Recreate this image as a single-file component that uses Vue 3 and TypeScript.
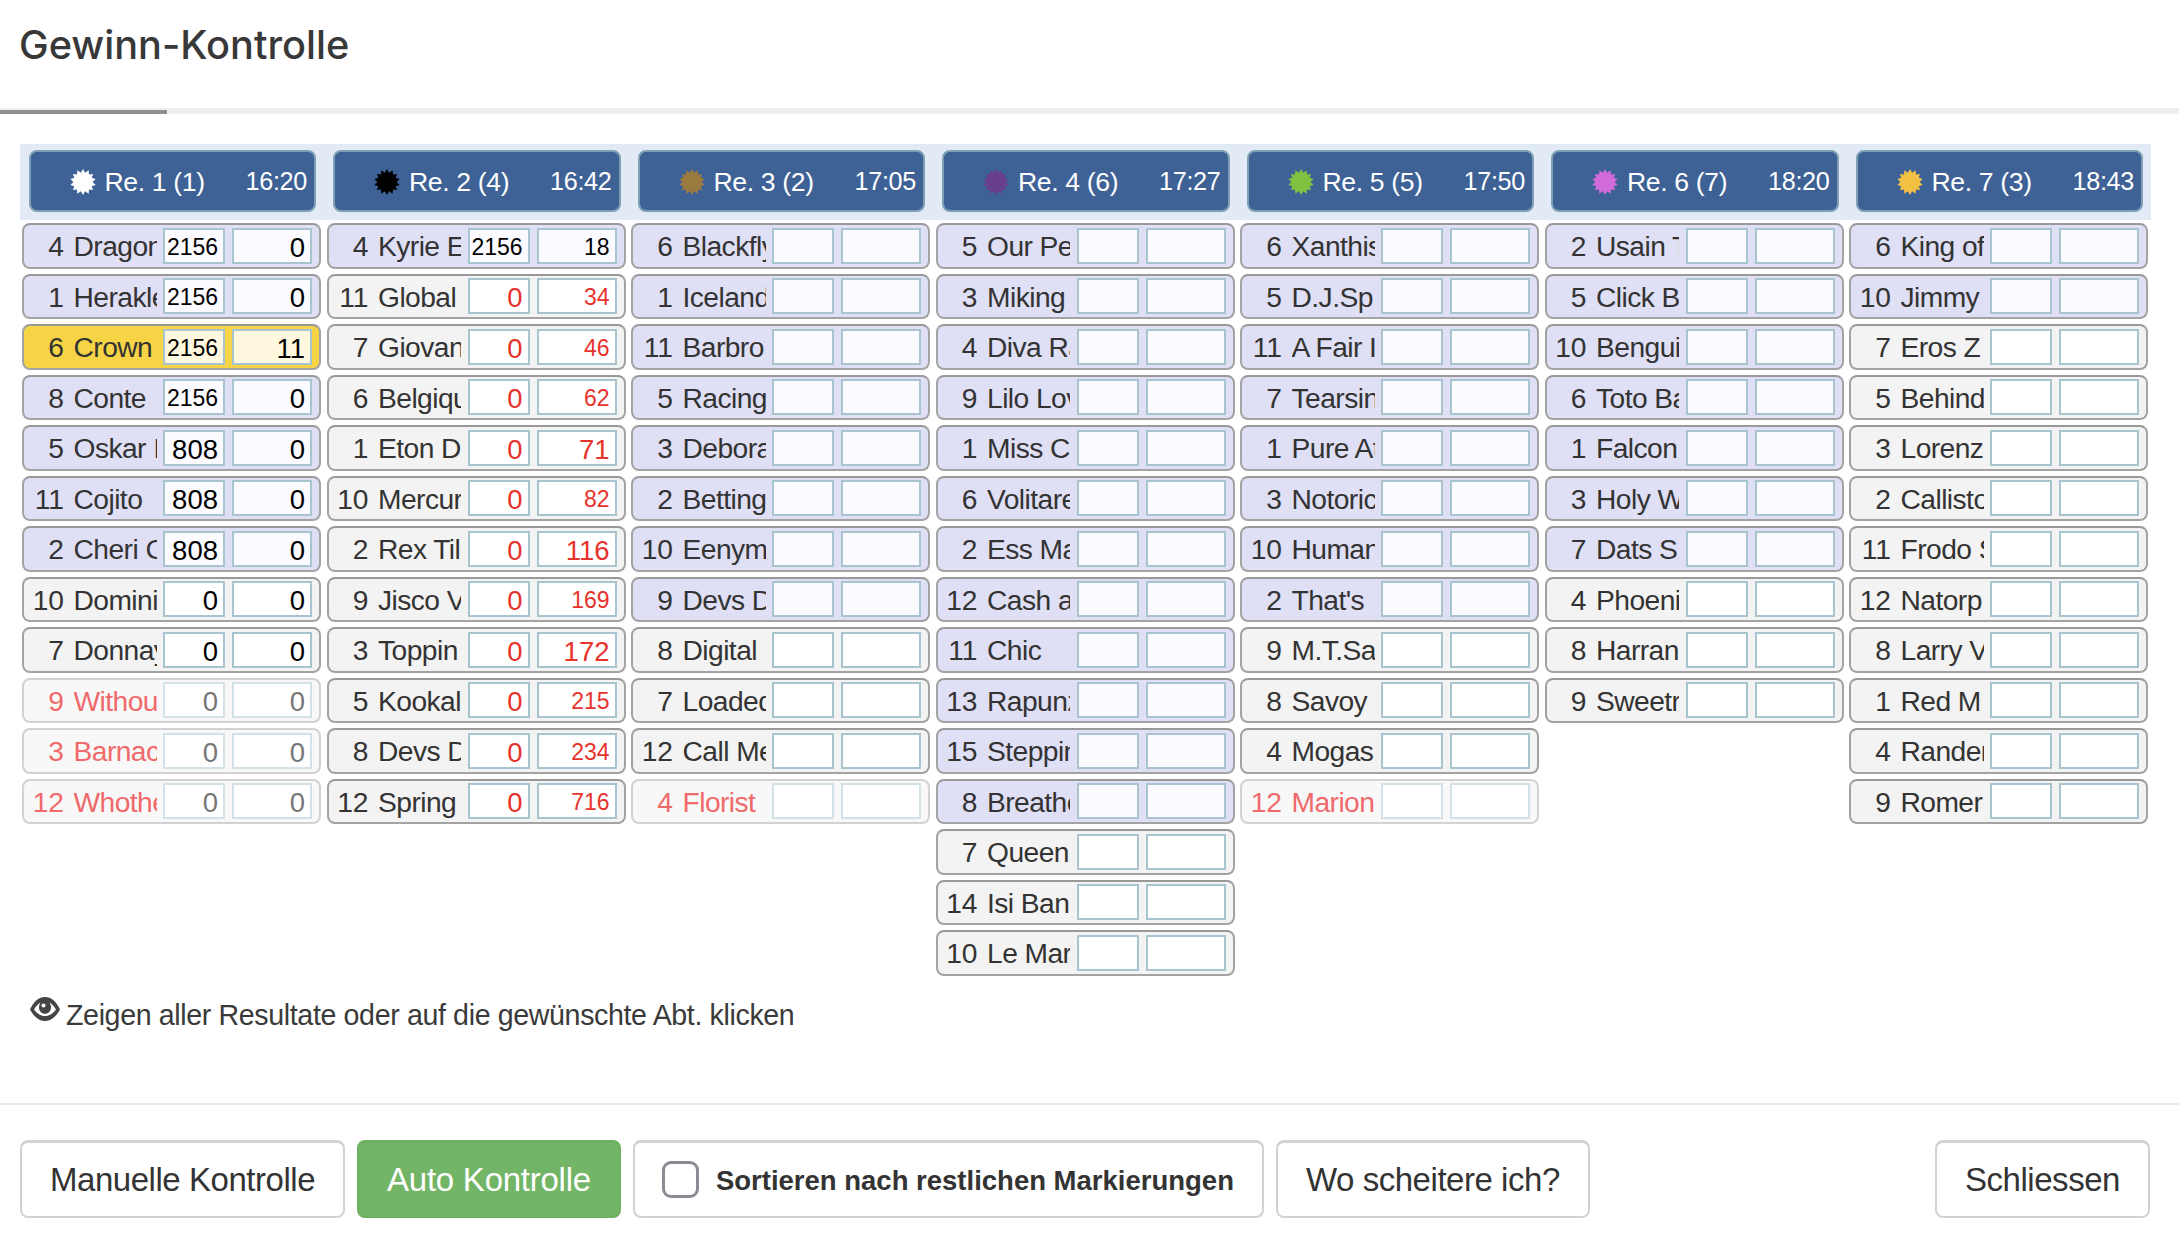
<script setup lang="ts">
interface Race { title: string; time: string; color: string; rows: string[]; highlighted: number; a?: string[]; b?: string[]; out?: number[]; gold?: number }

const big = new Set(['0', '808', '11', '71', '116', '172'])

const races: Race[] = [
  { title: 'Re. 1 (1)', time: '16:20', color: '#ffffff', highlighted: 7, gold: 2, out: [9, 10, 11],
    rows: ['4|Dragon', '1|Herakles', '6|Crown', '8|Conte', '5|Oskar I', '11|Cojito', '2|Cheri C', '10|Dominic', '7|Donnay', '9|Without', '3|Barnacle', '12|Whothe'],
    a: ['2156', '2156', '2156', '2156', '808', '808', '808', '0', '0', '0', '0', '0'],
    b: ['0', '0', '11', '0', '0', '0', '0', '0', '0', '0', '0', '0'] },
  { title: 'Re. 2 (4)', time: '16:42', color: '#000000', highlighted: 1,
    rows: ['4|Kyrie E', '11|Global', '7|Giovanni', '6|Belgique', '1|Eton D', '10|Mercury', '2|Rex Til', '9|Jisco V', '3|Toppin', '5|Kookal', '8|Devs D', '12|Spring'],
    a: ['2156', '0', '0', '0', '0', '0', '0', '0', '0', '0', '0', '0'],
    b: ['18', '34', '46', '62', '71', '82', '116', '169', '172', '215', '234', '716'] },
  { title: 'Re. 3 (2)', time: '17:05', color: '#9a7a3e', highlighted: 8, out: [11],
    rows: ['6|Blackfly', '1|Iceland', '11|Barbro', '5|Racing', '3|Deborah', '2|Betting', '10|Eenym', '9|Devs D', '8|Digital', '7|Loaded', '12|Call Me', '4|Florist'] },
  { title: 'Re. 4 (6)', time: '17:27', color: '#693f8c', highlighted: 12,
    rows: ['5|Our Pe', '3|Miking', '4|Diva Ra', '9|Lilo Lov', '1|Miss C', '6|Volitare', '2|Ess Ma', '12|Cash a', '11|Chic', '13|Rapunz', '15|Steppin', '8|Breathe', '7|Queen', '14|Isi Ban', '10|Le Mar'] },
  { title: 'Re. 5 (5)', time: '17:50', color: '#7fc241', highlighted: 8, out: [11],
    rows: ['6|Xanthis', '5|D.J.Sp', '11|A Fair I', '7|Tearsin', '1|Pure At', '3|Notoric', '10|Human', "2|That's", '9|M.T.Sa', '8|Savoy', '4|Mogas', '12|Marion'] },
  { title: 'Re. 6 (7)', time: '18:20', color: '#d26bdb', highlighted: 7,
    rows: ['2|Usain T', '5|Click B', '10|Bengui', '6|Toto Ba', '1|Falcon', '3|Holy W', '7|Dats S', '4|Phoeni', '8|Harran', '9|Sweetr'] },
  { title: 'Re. 7 (3)', time: '18:43', color: '#f2c144', highlighted: 2,
    rows: ['6|King of', '10|Jimmy', '7|Eros Z', '5|Behind', '3|Lorenz', '2|Callisto', '11|Frodo S', '12|Natorp', '8|Larry V', '1|Red M', '4|Rander', '9|Romer'] }
]

function star(): string {
  const pts: string[] = []
  const n = 14
  for (let i = 0; i < n * 2; i++) {
    const r = i % 2 === 0 ? 13 : 9.6
    const t = (Math.PI * i) / n - Math.PI / 2
    pts.push(`${(13 + r * Math.cos(t)).toFixed(2)},${(13 + r * Math.sin(t)).toFixed(2)}`)
  }
  return pts.join(' ')
}
const starPoints = star()

function rowClass(r: Race, i: number): string {
  if (r.out?.includes(i)) return 'out'
  if (r.gold === i) return 'gold'
  return i < r.highlighted ? 'lilac' : 'plain'
}
function valueClass(v: string | undefined, red: boolean): string[] {
  const c: string[] = []
  if (v && !big.has(v)) c.push('small')
  if (red) c.push('red')
  return c
}
</script>

<template>
  <div class="page">
    <header class="top">
      <h1>Gewinn-Kontrolle</h1>
    </header>
    <div class="tabline"><div class="tabmark"></div></div>

    <main class="board">
      <section v-for="(race, ri) in races" :key="ri" class="race">
        <div class="strip">
          <div class="head">
            <svg class="star" width="26" height="26" viewBox="0 0 26 26"><polygon :points="starPoints" :fill="race.color" /></svg>
            <span class="title">{{ race.title }}</span>
            <span class="time">{{ race.time }}</span>
          </div>
        </div>
        <div class="rows">
          <div v-for="(row, i) in race.rows" :key="i" class="row" :class="rowClass(race, i)">
            <span class="num">{{ row.split('|')[0] }}</span>
            <span class="name">{{ row.split('|')[1] }}</span>
            <span class="box one" :class="valueClass(race.a?.[i], ri === 1 && i > 0)">{{ race.a?.[i] }}</span>
            <span class="box two" :class="valueClass(race.b?.[i], ri === 1 && i > 0)">{{ race.b?.[i] }}</span>
          </div>
        </div>
      </section>
    </main>

    <p class="note">
      <svg class="eye" width="30" height="24" viewBox="0 0 30 24">
        <path d="M0 12.500C3.500 4.500 9 0 15 0s11.500 4.500 15 12.500C26.500 19.500 21 24 15 24S3.500 19.500 0 12.500z" fill="#444" />
        <path d="M4 12.500C6.500 8.500 8.500 6.500 10.500 5.500 9.500 7 9 8.700 9 10.500c0 3.500 2.700 6.300 6 6.300s6-2.800 6-6.300c0-1.800-.5-3.500-1.500-5 2 1 4 3 6.500 7-3 4-6.500 6.500-11 6.500S7 16.500 4 12.500z" fill="#fff" />
        <circle cx="13.500" cy="8.500" r="2" fill="#fff" />
      </svg>
      <span>Zeigen aller Resultate oder auf die gewünschte Abt. klicken</span>
    </p>

    <footer class="foot">
      <button class="btn">Manuelle Kontrolle</button>
      <button class="btn green">Auto Kontrolle</button>
      <label class="btn sort"><span class="check"></span><b>Sortieren nach restlichen Markierungen</b></label>
      <button class="btn wo">Wo scheitere ich?</button>
      <button class="btn close">Schliessen</button>
    </footer>
  </div>
</template>

<style scoped>
.page {
  width: 2179px;
  height: 1239px;
  background: #fff;
  color: #333;
  font-family: "Liberation Sans", Arial, sans-serif;
  overflow: hidden;
}
.top {
  height: 108px;
  padding: 24px 0 0 19px;
  box-sizing: border-box;
}
h1 {
  margin: 0;
  font-family: Inter, "Liberation Sans", sans-serif;
  font-size: 39.700px;
  line-height: 42px;
  font-weight: 500;
  color: #383838;
}
.tabline {
  height: 6px;
  background: #eeeeee;
  display: flex;
  align-items: flex-end;
}
.tabmark {
  width: 167px;
  height: 4px;
  background: #8f8f8f;
}
.board {
  display: grid;
  grid-template-columns: repeat(7, 304.500px);
  height: 831px;
  box-sizing: border-box;
  margin-top: 30px;
  padding-left: 19.500px;
  align-content: start;
}
.strip {
  background: #e2eaf5;
  height: 76px;
  padding: 6px 8px 8px 9px;
  box-sizing: border-box;
}
.head {
  height: 62px;
  box-sizing: border-box;
  display: flex;
  align-items: center;
  background: #3e6295;
  border: 2px solid #7f9fb5;
  border-radius: 8px;
  color: #fff;
  padding: 0 7px 0 39px;
}
.star { flex: none; margin-top: 1px; }
.title {
  font-size: 26.600px;
  letter-spacing: -0.35px;
  margin-left: 9px;
  margin-top: 3px;
}
.time {
  margin-left: auto;
  font-size: 25.200px;
  letter-spacing: -0.3px;
}
.rows {
  display: flex;
  flex-direction: column;
  gap: 5px;
  padding: 3px 3px 0 2.500px;
}
.row {
  height: 45.500px;
  box-sizing: border-box;
  display: flex;
  align-items: center;
  border: 2px solid #a3a3a3;
  border-top-color: #999;
  border-radius: 8px;
  font-size: 28.200px;
  padding-left: 8px;
}
.lilac { background: #dfdff5; }
.plain { background: #f3f3f3; }
.gold { background: #f6d445; }
.out {
  background: #f8f8f8;
  border-color: #d2d2d2;
  color: #f0696b;
}
.num {
  flex: none;
  width: 32px;
  margin-top: 2px;
  white-space: nowrap;
  display: flex;
  justify-content: flex-end;
}
.name {
  flex: none;
  width: 83px;
  margin: 2px 1px 0 9.500px;
  overflow: hidden;
  white-space: nowrap;
  letter-spacing: -0.55px;
}
.box {
  flex: none;
  box-sizing: border-box;
  height: 36px;
  line-height: 35px;
  border: 2px solid #a8c4cf;
  background: #fff;
  color: #000;
  text-align: right;
  padding: 0 5px 0 2px;
  white-space: nowrap;
  font-size: 27.500px;
}
.lilac .box { background: #fbfaff; }
.gold .box { background: #fff8de; }
.out .box { border-color: #d3e1e8; color: #777; }
.box.small { font-size: 23px; }
.box.red { color: #e8322c; }
.one { width: 62px; margin-left: 5.500px; }
.two { width: 80px; margin-left: 7px; }
.note {
  margin: 0;
  height: 128px;
  box-sizing: border-box;
  padding: 22px 0 0 30px;
  display: flex;
  align-items: flex-start;
  font-size: 28.600px;
  letter-spacing: -0.37px;
  line-height: 32px;
  color: #3a3a3a;
  gap: 6px;
}
.note span { margin-top: 2px; }
.eye { flex: none; }
.foot {
  border-top: 2px solid #e8e8e8;
  display: flex;
  gap: 12px;
  padding: 35px 29px 0 20px;
}
.btn {
  height: 78px;
  box-sizing: border-box;
  border: 2px solid #d2d2d2;
  border-top-width: 3px;
  border-radius: 8px;
  background: #fff;
  color: #333;
  font: 33px "Liberation Sans", Arial, sans-serif;
  letter-spacing: -0.46px;
  padding: 0 28px;
  display: flex;
  align-items: center;
}
.green {
  background: #72b566;
  border-color: #6db061;
  color: #fff;
  letter-spacing: -0.25px;
}
.wo { letter-spacing: -0.46px; padding: 0 28px; }
.sort { padding: 0 28px 0 27px; }
.sort b { font-size: 27.500px; letter-spacing: 0; margin-top: 2px; }
.check {
  width: 37px;
  height: 37px;
  box-sizing: border-box;
  border: 3.500px solid #8b8b93;
  border-radius: 9px;
  margin-right: 17px;
  flex: none;
}
.close { margin-left: auto; }
</style>
